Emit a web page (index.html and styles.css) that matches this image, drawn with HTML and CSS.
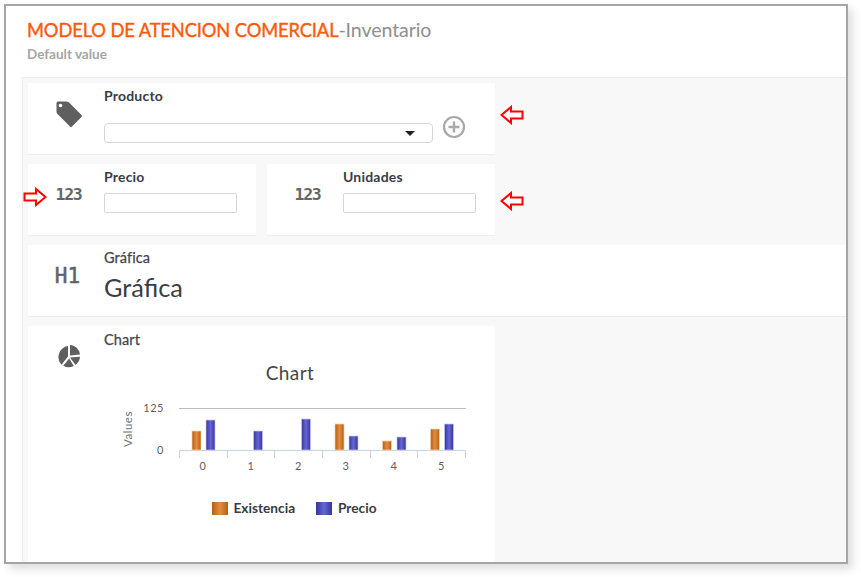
FILE: index.html
```html
<!DOCTYPE html>
<html lang="es">
<head>
<meta charset="utf-8">
<title>Inventario</title>
<link rel="stylesheet" href="styles.css">
</head>
<body>
<div class="frame">
  <header class="head">
    <h1 class="title"><span class="title-main">MODELO DE ATENCION COMERCIAL</span><span class="title-sub">-Inventario</span></h1>
    <p class="subtitle">Default value</p>
  </header>
  <main class="panel">
    <section class="card card-half">
      <div class="icon">
        <svg class="svg-tag" width="28" height="28" viewBox="0 0 28 28"><path d="M3 1.500H11.500Q13 1.500 14 2.500L26.500 15Q27.500 16 26.500 17L17 26.500Q16 27.500 15 26.500L2.500 14Q1.500 13 1.500 11.500V3Q1.500 1.500 3 1.500Z" fill="#5f5f5f"/><circle cx="5.500" cy="5.500" r="1.800" fill="#fff"/></svg>
      </div>
      <div class="body">
        <label class="label">Producto</label>
        <div class="select-row">
          <div class="select"><span class="caret"></span></div>
          <svg class="plus" width="24" height="24" viewBox="0 0 24 24"><circle cx="12" cy="12" r="10" fill="none" stroke="#a8a8a8" stroke-width="2.200"/><path d="M12 6.500V17.500M6.500 12H17.500" stroke="#a8a8a8" stroke-width="2.400"/></svg>
        </div>
      </div>
    </section>
    <div class="pair">
      <section class="card">
        <div class="icon"><span class="glyph-num">123</span></div>
        <div class="body">
          <label class="label">Precio</label>
          <div class="input"></div>
        </div>
      </section>
      <section class="card">
        <div class="icon"><span class="glyph-num">123</span></div>
        <div class="body">
          <label class="label">Unidades</label>
          <div class="input"></div>
        </div>
      </section>
    </div>
    <section class="card">
      <div class="icon"><span class="glyph-h">H1</span></div>
      <div class="body">
        <label class="label label-thin">Gráfica</label>
        <div class="heading">Gráfica</div>
      </div>
    </section>
    <section class="card card-half card-chart">
      <div class="icon icon-pie">
        <svg width="24" height="24" viewBox="0 0 24 24"><path d="M13 0.800A11 11 0 0 1 23 10.500L13 11.500Z" fill="#5f5f5f"/><path d="M11 2V12.500L4.500 20.800A11.300 11.300 0 0 1 11 2Z" fill="#5f5f5f"/><path d="M13 13.500L23 12.800A11 11 0 0 1 18.500 21Z" fill="#5f5f5f"/><path d="M12.200 14.500L16.800 22A11 11 0 0 1 6.200 21.800Z" fill="#5f5f5f"/></svg>
      </div>
      <div class="body body-chart">
        <label class="label label-thin">Chart</label>
        <svg class="chart" width="391" height="170" viewBox="104 355 391 170">
          <defs>
            <linearGradient id="or" x1="0" x2="1" y1="0" y2="0"><stop offset="0" stop-color="#b5600f"/><stop offset=".5" stop-color="#e68c40"/><stop offset="1" stop-color="#b5600f"/></linearGradient>
            <linearGradient id="bl" x1="0" x2="1" y1="0" y2="0"><stop offset="0" stop-color="#35359e"/><stop offset=".5" stop-color="#6666d4"/><stop offset="1" stop-color="#35359e"/></linearGradient>
          </defs>
          <text class="c-title" x="290" y="380" text-anchor="middle">Chart</text>
          <path d="M179 408.500H466" stroke="#bdbdbd" fill="none"/>
          <path d="M179.500 458V450.500H465.500V458M227.500 450V458M274.500 450V458M322.500 450V458M370.500 450V458M417.500 450V458" stroke="#c3d5e6" fill="none"/>
          <text class="c-tick" x="164" y="412" text-anchor="end">125</text>
          <text class="c-tick" x="164" y="454" text-anchor="end">0</text>
          <text class="c-axis" transform="translate(132 429) rotate(-90)" text-anchor="middle">Values</text>
          <g class="c-tick">
            <text x="203" y="470" text-anchor="middle">0</text>
            <text x="251" y="470" text-anchor="middle">1</text>
            <text x="298.500" y="470" text-anchor="middle">2</text>
            <text x="346" y="470" text-anchor="middle">3</text>
            <text x="394" y="470" text-anchor="middle">4</text>
            <text x="441.500" y="470" text-anchor="middle">5</text>
          </g>
          <g class="bars-or">
            <rect x="192" y="431" width="9" height="19" fill="url(#or)"/>
            <rect x="335" y="424" width="9" height="26" fill="url(#or)"/>
            <rect x="382.500" y="441" width="9" height="9" fill="url(#or)"/>
            <rect x="430.500" y="429" width="9" height="21" fill="url(#or)"/>
          </g>
          <g class="bars-bl">
            <rect x="206" y="420" width="9" height="30" fill="url(#bl)"/>
            <rect x="253.500" y="431" width="9" height="19" fill="url(#bl)"/>
            <rect x="301.500" y="419" width="9" height="31" fill="url(#bl)"/>
            <rect x="349" y="436" width="9" height="14" fill="url(#bl)"/>
            <rect x="397" y="437" width="9" height="13" fill="url(#bl)"/>
            <rect x="444.500" y="424" width="9" height="26" fill="url(#bl)"/>
          </g>
          <rect x="212" y="502" width="16" height="13" fill="url(#or)"/>
          <text class="c-legend" x="233.500" y="513">Existencia</text>
          <rect x="316" y="502" width="16" height="13" fill="url(#bl)"/>
          <text class="c-legend" x="338" y="513">Precio</text>
        </svg>
      </div>
    </section>
  </main>
  <svg class="arrow arrow-a" width="24" height="20" viewBox="0 0 24 20"><path d="M1.500 10L11 2V6.500H22.500V13.500H11V18Z" fill="#fff" stroke="#f00" stroke-width="2"/></svg>
  <svg class="arrow arrow-b" width="24" height="20" viewBox="0 0 24 20"><path d="M22.500 10L13 2V6.500H1.500V13.500H13V18Z" fill="#fff" stroke="#f00" stroke-width="2"/></svg>
  <svg class="arrow arrow-c" width="24" height="20" viewBox="0 0 24 20"><path d="M1.500 10L11 2V6.500H22.500V13.500H11V18Z" fill="#fff" stroke="#f00" stroke-width="2"/></svg>
</div>
</body>
</html>
```
FILE: styles.css
```css
* { box-sizing: border-box; }
html, body { margin: 0; padding: 0; background: #fff; }
body { font-family: Lato, "Open Sans", sans-serif; overflow: hidden; height: 577px; }
.frame {
  position: relative;
  width: 844px;
  height: 560px;
  margin: 4px 0 0 4px;
  border: 2px solid #a5a5a5;
  background: #fff;
  box-shadow: 5px 5px 8px rgba(0, 0, 0, .13);
  display: flex;
  flex-direction: column;
}
.head { height: 71px; padding: 12px 0 0 21px; flex: none; }
.title { margin: 0; font-size: 19px; line-height: 24px; font-weight: 400; }
.title-main { color: #ff5a0a; font-size: 18.300px; font-weight: 400; letter-spacing: -.1px; -webkit-text-stroke: .4px #ff5a0a; }
.title-sub { color: #8d8f92; font-size: 19.600px; letter-spacing: -.1px; }
.subtitle { margin: 4px 0 0; font-size: 13.500px; line-height: 16px; font-weight: 700; color: #a6a6a6; }
.panel {
  flex: 1;
  min-height: 0;
  margin-left: 16px;
  padding: 5px 0 0 5px;
  background: #f8f8f8;
  border-top: 1px solid #ececec;
  border-left: 1px solid #ececec;
  display: flex;
  flex-direction: column;
  gap: 10px;
  overflow: hidden;
}
.card {
  display: flex;
  background: #fff;
  height: 71px;
  flex: none;
  box-shadow: 0 1px 1px rgba(0, 0, 0, .04);
}
.card-half { width: 467px; }
.card-chart { height: 236px; }
.pair { display: flex; gap: 11px; width: 467px; flex: none; }
.pair .card { flex: 1; }
.icon { width: 76px; flex: none; display: flex; justify-content: center; padding: 17px 0 0 5px; }
.icon-pie { padding-top: 18px; }
.body { flex: 1; min-width: 0; padding-top: 5px; }
.body-chart { padding-top: 6px; }
.label { display: block; font-size: 14px; line-height: 16px; font-weight: 700; letter-spacing: .2px; color: #3b3b45; }
.label-thin { font-weight: 400; font-size: 14.500px; letter-spacing: .1px; color: #44444c; -webkit-text-stroke: .25px #44444c; }
.select-row { display: flex; align-items: flex-start; gap: 9px; margin-top: 19px; }
.select {
  position: relative;
  width: 329px;
  height: 20px;
  border: 1px solid #d6d6d6;
  border-radius: 4px;
  background: #fff;
}
.caret {
  position: absolute;
  right: 17px;
  top: 7px;
  border-left: 5px solid transparent;
  border-right: 5px solid transparent;
  border-top: 5px solid #222;
}
.plus { margin-top: -8px; }
.input { width: 133px; height: 20px; margin-top: 8px; border: 1px solid #d6d6d6; border-radius: 2px; background: #fff; }
.glyph-num { font-family: "DejaVu Sans Mono", monospace; font-size: 16.500px; line-height: 28px; color: #666; font-weight: 700; letter-spacing: -1.300px; }
.glyph-h { font-family: "DejaVu Sans Mono", monospace; font-size: 21px; line-height: 28px; color: #5f6266; margin-left: -2px; -webkit-text-stroke: .5px #5f6266; }
.heading { font-size: 25.300px; line-height: 30px; margin-top: 6px; color: #3a3d44; }
.chart { display: block; margin-top: 7px; }
.c-title { font-size: 19px; fill: #44464c; letter-spacing: .4px; }
.c-tick { font-size: 11px; fill: #5d6066; letter-spacing: .5px; }
.c-axis { font-size: 11.500px; fill: #6c6f75; letter-spacing: .5px; }
.c-legend { font-size: 13.700px; font-weight: 700; fill: #3a3a48; }
.bars-or rect { stroke: #f3d2b4; stroke-width: .7px; }
.bars-bl rect { stroke: #c9c9ee; stroke-width: .7px; }
.arrow { position: absolute; }
.arrow-a { left: 494px; top: 99px; }
.arrow-b { left: 17px; top: 181px; }
.arrow-c { left: 494px; top: 185px; }
```
